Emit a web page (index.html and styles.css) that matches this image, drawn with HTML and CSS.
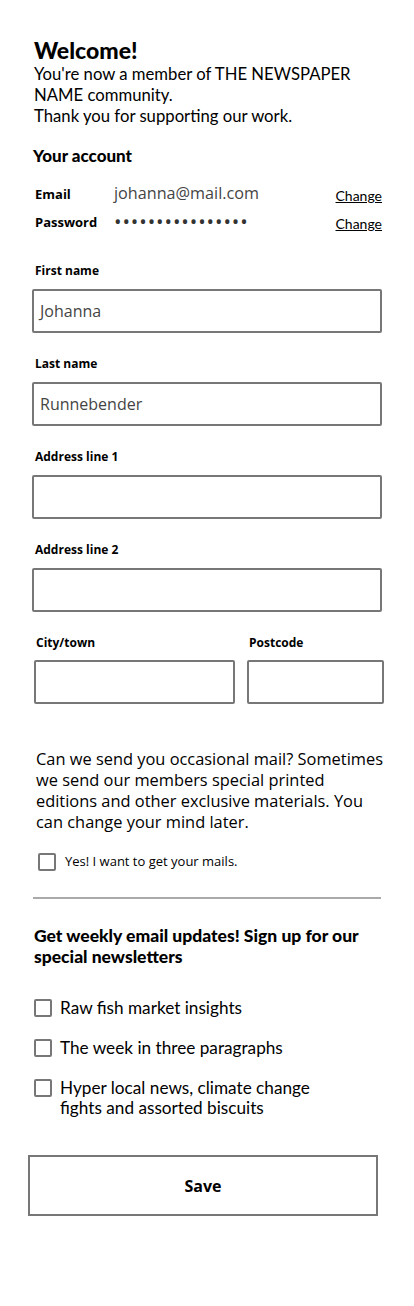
FILE: index.html
```html
<!DOCTYPE html>
<html lang="en">
<head>
<meta charset="utf-8">
<title>Welcome</title>
<link rel="stylesheet" href="styles.css">
</head>
<body>
<main class="page">
  <section class="intro">
    <h1 class="title">Welcome!</h1>
    <p class="lead">You're now a member of THE NEWSPAPER NAME community.<br>Thank you for supporting our work.</p>
  </section>

  <section class="account">
    <h2 class="section-title">Your account</h2>
    <div class="acc-row">
      <span class="acc-label">Email</span>
      <span class="acc-value">johanna@mail.com</span>
      <a class="acc-change" href="#">Change</a>
    </div>
    <div class="acc-row">
      <span class="acc-label">Password</span>
      <span class="acc-value dots">••••••••••••••••</span>
      <a class="acc-change" href="#">Change</a>
    </div>
  </section>

  <form class="form">
    <div class="field">
      <label class="label">First name</label>
      <div class="input">Johanna</div>
    </div>
    <div class="field">
      <label class="label">Last name</label>
      <div class="input">Runnebender</div>
    </div>
    <div class="field">
      <label class="label">Address line 1</label>
      <div class="input"></div>
    </div>
    <div class="field">
      <label class="label">Address line 2</label>
      <div class="input"></div>
    </div>
    <div class="field-row">
      <div class="field city">
        <label class="label">City/town</label>
        <div class="input"></div>
      </div>
      <div class="field post">
        <label class="label">Postcode</label>
        <div class="input"></div>
      </div>
    </div>

    <div class="mail">
      <p class="mail-text">Can we send you occasional mail? Sometimes we send our members special printed editions and other exclusive materials. You can change your mind later.</p>
      <div class="check small">
        <span class="box"></span>
        <span class="check-label">Yes! I want to get your mails.</span>
      </div>
    </div>

    <hr class="rule">

    <div class="news">
      <h3 class="news-title">Get weekly email updates! Sign up for our special newsletters</h3>
      <div class="check">
        <span class="box"></span>
        <span class="check-label">Raw fish market insights</span>
      </div>
      <div class="check">
        <span class="box"></span>
        <span class="check-label">The week in three paragraphs</span>
      </div>
      <div class="check">
        <span class="box"></span>
        <span class="check-label">Hyper local news, climate change<br>fights and assorted biscuits</span>
      </div>
    </div>

    <div class="save">Save</div>
  </form>
</main>
</body>
</html>
```

FILE: styles.css
```css
* { box-sizing: border-box; }
html, body { margin: 0; padding: 0; background: #fff; }
body { color: #000; font-family: "Open Sans", "Noto Sans", sans-serif; }

.page {
  width: 414px;
  padding: 36px 0 80px 0;
}

.intro { padding-left: 34px; }
.title {
  margin: 0;
  font-family: Lato, sans-serif;
  font-weight: 900;
  font-size: 23px;
  line-height: 28px;
}
.lead {
  margin: 0;
  font-family: Lato, sans-serif;
  font-size: 16.7px;
  line-height: 21px;
  width: 340px;
}

.account { padding-left: 33px; margin-top: 18px; }
.section-title {
  margin: 0;
  font-family: Lato, sans-serif;
  font-weight: 900;
  font-size: 17px;
  line-height: 22px;
}
.acc-row {
  display: flex;
  align-items: baseline;
  width: 349px;
  height: 30px;
  padding-left: 2px;
}
.acc-row:first-of-type { margin-top: 15px; }
.acc-label {
  width: 79px;
  font-weight: 700;
  font-size: 13px;
}
.acc-value {
  flex: 1;
  font-size: 16.2px;
  color: #444;
}
.acc-value.dots {
  font-size: 20px;
  line-height: 16px;
  letter-spacing: 0.9px;
  color: #333;
  position: relative;
  top: 2px;
}
.acc-change {
  font-family: Lato, sans-serif;
  font-size: 14px;
  color: #000;
  text-decoration: underline;
  position: relative;
  top: 2px;
}

.form { margin-top: 21px; }
.field { padding-left: 32px; margin-bottom: 23px; }
.label {
  display: block;
  padding-left: 3px;
  font-weight: 700;
  font-size: 12px;
  line-height: 16px;
  margin-bottom: 10px;
}
.input {
  width: 350px;
  height: 44px;
  border: 2px solid #777;
  border-radius: 2px;
  padding: 8px 6px;
  font-size: 16px;
  line-height: 24px;
  color: #444;
}
.field-row {
  display: flex;
  gap: 12px;
  padding-left: 34px;
}
.field-row .field { padding-left: 0; }
.field-row .label { padding-left: 2px; margin-bottom: 9px; }
.city .input { width: 201px; }
.post .input { width: 137px; }

.mail { padding-left: 36px; margin-top: 21px; }
.mail-text {
  margin: 0;
  width: 350px;
  font-size: 16.4px;
  line-height: 21px;
}
.check {
  display: flex;
  align-items: flex-start;
  gap: 8px;
  font-size: 16px;
  line-height: 20px;
}
.box {
  flex: none;
  width: 18px;
  height: 18px;
  border: 2px solid #777;
  border-radius: 2px;
  margin-top: 1px;
}
.check.small { margin-top: 19px; padding-left: 2px; align-items: center; gap: 9px; }
.check.small .check-label { font-size: 13px; }

.rule {
  margin: 26px 0 0 33px;
  width: 348px;
  height: 2px;
  border: none;
  background: #aaa;
}

.news { padding-left: 34px; margin-top: 26px; }
.news-title {
  margin: 0 0 31px 0;
  width: 350px;
  font-family: Lato, sans-serif;
  font-weight: 900;
  font-size: 17.5px;
  line-height: 21px;
}
.news .check { margin-bottom: 20px; font-family: Lato, sans-serif; font-size: 17.2px; }

.save {
  margin: 37px 0 0 28px;
  width: 350px;
  height: 61px;
  border: 2px solid #777;
  display: flex;
  align-items: center;
  justify-content: center;
  font-weight: 700;
  font-size: 16px;
}
```
